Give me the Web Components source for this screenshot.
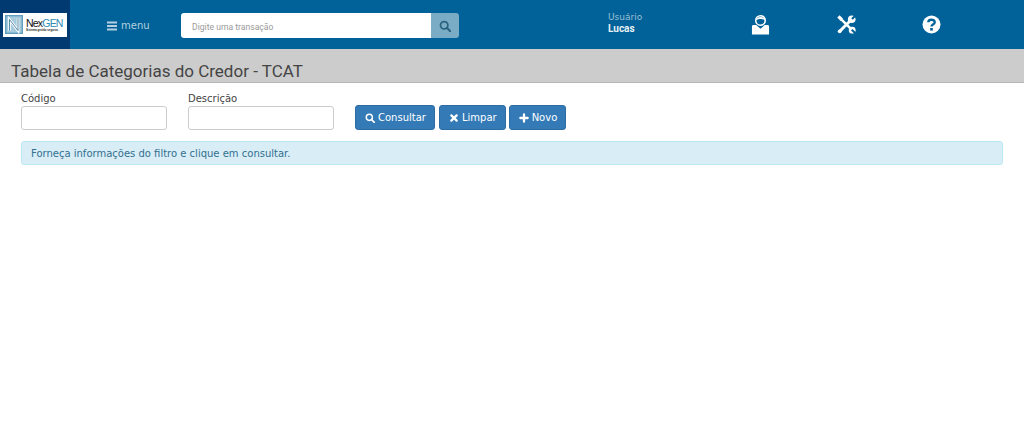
<!DOCTYPE html>
<html lang="pt">
<head>
<meta charset="utf-8">
<title>TCAT</title>
<style>
    html, body { margin: 0; padding: 0; background: #fff; }
    body { width: 1024px; height: 448px; overflow: hidden; font-family: "DejaVu Sans", sans-serif; }
</style>
</head>
<body>
<app-header></app-header>
<page-title>Tabela de Categorias do Credor - TCAT</page-title>
<filter-form>
    <form-field label="Código"></form-field>
    <form-field label="Descrição"></form-field>
    <div slot="actions" style="display:contents">
        <action-button icon="search">Consultar</action-button>
        <action-button icon="times">Limpar</action-button>
        <action-button icon="plus">Novo</action-button>
    </div>
</filter-form>
<info-alert>Forneça informações do filtro e clique em consultar.</info-alert>

<script>
const ICONS = {
    search: '<circle cx="6.5" cy="6.5" r="4.6" fill="none" stroke="currentColor" stroke-width="2.2"/><path d="M9.8 9.8 14 14" stroke="currentColor" stroke-width="2.6" stroke-linecap="round"/>',
    times: '<path d="M3.5 3.5 11.5 11.5M11.5 3.5 3.5 11.5" stroke="currentColor" stroke-width="3.4" stroke-linecap="round"/>',
    plus: '<path d="M7.5 2v11M2 7.5h11" stroke="currentColor" stroke-width="3.4" stroke-linecap="round"/>'
};

class AppHeader extends HTMLElement {
    constructor() {
        super();
        this.attachShadow({ mode: 'open' });
    }

    connectedCallback() {
        this.shadowRoot.innerHTML = `
            <style>
                :host { display: flex; height: 49px; background: #006298; color: #fff; align-items: stretch; }
                .brand { width: 70px; background: #003a70; display: flex; align-items: center; justify-content: center; }
                .logo { width: 64px; height: 24px; background: #fff; display: flex; align-items: center; padding-left: 2px; box-sizing: border-box; gap: 3px; }
                .logo svg { flex: none; }
                .logo-text { display: flex; flex-direction: column; line-height: 1; }
                .name { font: 10.500px/10px "Liberation Sans", sans-serif; letter-spacing: -0.800px; color: #111; white-space: nowrap; }
                .name b { font-weight: 400; color: #2f8db5; }
                .tag { font: 700 2.800px/4px "Liberation Sans", sans-serif; color: #222; white-space: nowrap; }
                .menu { margin-left: 37px; width: 74px; padding-top: 2px; box-sizing: border-box; display: flex; align-items: center; gap: 4px; font: 10px "DejaVu Sans", sans-serif; color: #b4cfdf; }
                .search { display: flex; width: 278px; height: 25px; margin-top: 13px; }
                .search .box { width: 250px; background: #fff; border-radius: 3px 0 0 3px; font: 8.600px Roboto, sans-serif; color: #9a9a9a; display: flex; align-items: center; padding: 2px 0 0 11px; box-sizing: border-box; }
                .search .go { width: 28px; background: #7aacc6; border-radius: 0 3px 3px 0; display: flex; align-items: center; justify-content: center; color: #2b627f; }
                .user { margin-left: 149px; width: 100px; margin-top: 12px; font: 9px/11px "DejaVu Sans", sans-serif; color: #9dbfd3; }
                .user b { display: block; color: #e6f0f5; font: 700 10px/11px Roboto, sans-serif; }
                .tools { display: flex; }
                .tools span { width: 86px; display: flex; align-items: center; justify-content: center; box-sizing: border-box; }
                .tools span:first-child { margin-left: 10px; width: 84px; padding-top: 1px; }
                .tools span:nth-child(2) { padding-left: 2px; }
            </style>
            <div class="brand">
                <div class="logo">
                    <svg width="18" height="19" viewBox="0 0 18 19"><rect x="0.7" y="0.7" width="16.600" height="17.600" fill="#a6cbdc" stroke="#5f9fbd" stroke-width="1.400"/><path d="M4.500 15.500V4.500l8.500 11V3" fill="none" stroke="#fff" stroke-width="2.600"/><path d="M4.500 15.500V4.500l8.500 11V3" fill="none" stroke="#2e6f92" stroke-width="0.800"/></svg>
                    <div class="logo-text"><span class="name">Nex<b>GEN</b></span><span class="tag">Sistema gestão seguros</span></div>
                </div>
            </div>
            <div class="menu">
                <svg width="10" height="10" viewBox="0 0 10 10"><path d="M0 1.500h10M0 5h10M0 8.500h10" stroke="currentColor" stroke-width="1.800"/></svg>
                <span>menu</span>
            </div>
            <div class="search">
                <div class="box">Digite uma transação</div>
                <div class="go"><svg width="12" height="12" viewBox="0 0 15 15">${ICONS.search}</svg></div>
            </div>
            <div class="user">Usuário<b>Lucas</b></div>
            <div class="tools">
                <span><svg width="19" height="22" viewBox="0 0 20 22"><circle cx="10" cy="6.200" r="5" fill="none" stroke="#fff" stroke-width="1.600"/><path d="M5 6C6 1.500 14 1.500 15 6C12 4 8 4.500 5 6Z" fill="#fff"/><path d="M1 12.500C1 11.500 2 11 3 11H5.500L10 15L14.500 11H17C18 11 19 11.500 19 12.500V21H1Z" fill="#fff"/></svg></span>
                <span><svg width="19" height="19" viewBox="0 0 20 20"><path d="M1.500 1.500 5 5" stroke="#fff" stroke-width="3.500"/><path d="M4 4 16 16" stroke="#fff" stroke-width="2.600"/><circle cx="16" cy="16" r="3.600" fill="#fff"/><path d="M15.500 15.500 19.500 19.500" stroke="#006298" stroke-width="2.200"/><path d="M2.500 17.500 14 6" stroke="#fff" stroke-width="3"/><circle cx="2.800" cy="17.200" r="2" fill="#fff"/><circle cx="15.500" cy="4.500" r="4" fill="#fff"/><path d="M15.800 4.200 19.500 0.500" stroke="#006298" stroke-width="2.400"/></svg></span>
                <span><svg width="19" height="19" viewBox="0 0 19 19"><circle cx="9.500" cy="9.500" r="9" fill="#fff"/><path d="M6.300 7.300C6.300 3.900 12.700 3.900 12.700 7.200C12.700 9.600 9.500 9.500 9.500 11.500" fill="none" stroke="#006298" stroke-width="2.400"/><rect x="8.200" y="13" width="2.600" height="2.600" fill="#006298"/></svg></span>
            </div>
        `;
    }
}

class PageTitle extends HTMLElement {
    constructor() {
        super();
        this.attachShadow({ mode: 'open' });
        this.shadowRoot.innerHTML = `
            <style>
                :host { display: block; height: 34px; box-sizing: border-box; background: #cccccc; border-bottom: 1px solid #b5b5b5; padding: 11px 0 0 11px; font: 17px/22px Roboto, sans-serif; color: #444; }
            </style>
            <slot></slot>
        `;
    }
}

class FilterForm extends HTMLElement {
    constructor() {
        super();
        this.attachShadow({ mode: 'open' });
        this.shadowRoot.innerHTML = `
            <style>
                :host { display: flex; padding: 9px 0 0 21px; height: 58px; box-sizing: border-box; }
                .fields { display: flex; gap: 21px; }
                .actions { display: flex; gap: 3px; margin-left: 21px; padding-top: 13px; align-items: flex-start; }
            </style>
            <div class="fields"><slot></slot></div>
            <div class="actions"><slot name="actions"></slot></div>
        `;
    }
}

class FormField extends HTMLElement {
    constructor() {
        super();
        this.attachShadow({ mode: 'open' });
    }

    connectedCallback() {
        this.shadowRoot.innerHTML = `
            <style>
                :host { display: block; width: 146px; font: 10px/14px "DejaVu Sans", sans-serif; color: #444; }
                .box { height: 24px; box-sizing: border-box; border: 1px solid #ccc; border-radius: 3px; background: #fff; }
            </style>
            <div>${this.getAttribute('label')}</div>
            <div class="box"></div>
        `;
    }
}

class ActionButton extends HTMLElement {
    constructor() {
        super();
        this.attachShadow({ mode: 'open' });
    }

    connectedCallback() {
        const icon = ICONS[this.getAttribute('icon')];
        this.shadowRoot.innerHTML = `
            <style>
                :host { display: flex; align-items: center; height: 25px; padding: 0 8px 0 9px; box-sizing: border-box; gap: 3px; background: #337ab7; border: 1px solid #2e6da4; border-radius: 3px; color: #fff; font: 10px "DejaVu Sans", sans-serif; }
                :host(:first-child) { margin-right: 1px; }
            </style>
            <svg width="10" height="10" viewBox="0 0 15 15">${icon}</svg>
            <slot></slot>
        `;
    }
}

class InfoAlert extends HTMLElement {
    constructor() {
        super();
        this.attachShadow({ mode: 'open' });
        this.shadowRoot.innerHTML = `
            <style>
                :host { display: flex; align-items: center; margin-left: 21px; width: 982px; height: 24px; box-sizing: border-box; padding-left: 9px; background: #d9edf7; border: 1px solid #bce8f1; border-radius: 3px; color: #31708f; font: 10px "DejaVu Sans", sans-serif; }
            </style>
            <slot></slot>
        `;
    }
}

customElements.define('app-header', AppHeader);
customElements.define('page-title', PageTitle);
customElements.define('filter-form', FilterForm);
customElements.define('form-field', FormField);
customElements.define('action-button', ActionButton);
customElements.define('info-alert', InfoAlert);
</script>
</body>
</html>
